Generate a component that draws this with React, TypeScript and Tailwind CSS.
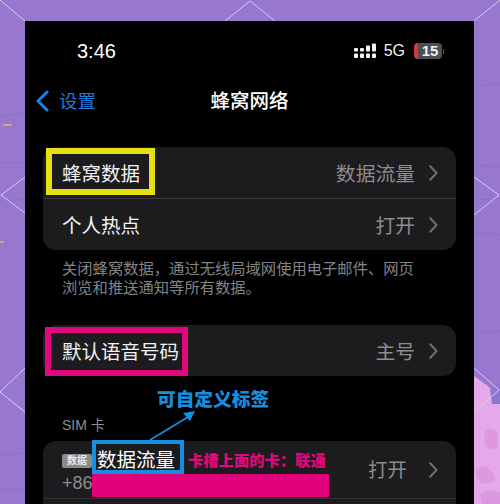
import type { ReactNode } from "react";

const CJK = "font-['Liberation_Sans','Noto_Sans_CJK_SC',sans-serif]";
const HEAVY = "font-['Noto_Sans_CJK_SC',sans-serif] font-black";

function Wallpaper() {
  return (
    <svg className="absolute inset-0" width="500" height="504" viewBox="0 0 500 504" fill="none">
      <path d="M474 376L488 386L500 402V504H474Z" fill="#e3a9e8" />
      <g fill="#d98ddb" opacity="0.55">
        <path d="M476 470Q484 462 492 472T484 484Q476 482 476 470Z" />
        <path d="M486 430Q498 426 498 440T488 448Q482 440 486 430Z" />
        <path d="M480 494Q490 488 500 492V504H482Z" />
      </g>
      <path d="M490 390L500 388V404L492 404Z" fill="#8a78d0" />
      <g stroke="#8a6cc2" strokeWidth="1" opacity="0.6">
        <path d="M0 116L25 113M0 163H25M0 201L25 199M0 455L25 453M0 490H25" />
        <path d="M474 86L500 84M474 165L500 167M474 200L500 199M474 232L500 235M474 333L500 331" />
      </g>
      <g stroke="#d9ccf0" strokeWidth="1">
        <path d="M0 0L25 21M225 21L250 1L275 21M474 21L500 0" />
        <path d="M25 177L1 195L25 213M25 368L0 392L25 412" />
        <path d="M474 177L499 195L474 215M474 368L499 390L474 412" />
      </g>
      <path d="M4 125H11" stroke="#d6a878" strokeWidth="2" strokeLinecap="round" />
      <path d="M0 242H3" stroke="#d6a878" strokeWidth="2" strokeLinecap="round" />
    </svg>
  );
}

function Chevron({ className }: { className?: string }) {
  return (
    <svg className={`shrink-0 ${className ?? "ml-[14px]"}`} width="9" height="16" viewBox="0 0 9 16" fill="none">
      <path d="M1.2 1.2L7.6 8L1.2 14.8" stroke="#6f6f72" strokeWidth="2" strokeLinecap="round" strokeLinejoin="round" />
    </svg>
  );
}

function Row({ label, value, className }: { label: string; value: string; className?: string }) {
  return (
    <div className={`flex items-center pl-[19px] pr-[18px] ${className ?? "h-[51px]"}`}>
      <span className="pt-[5px] text-[19.5px] text-[#f2f2f2]">{label}</span>
      <span className="ml-auto pt-[5px] text-[19.8px] text-[#8c8c8e]">{value}</span>
      <Chevron />
    </div>
  );
}

function Card({ children }: { children: ReactNode }) {
  return <div className="mx-[18px] overflow-hidden rounded-[13px] bg-[#1c1c1e]">{children}</div>;
}

function StatusBar() {
  return (
    <div className="flex h-[60px] items-center pl-[52px] pr-[30px]">
      <span className="font-['Liberation_Sans',sans-serif] text-[20px] font-medium text-white">3:46</span>
      <div className="ml-auto flex items-center">
        <svg width="23" height="16" viewBox="0 0 23 16" fill="#f5f5f5">
          <rect x="0" y="5" width="4" height="3.5" rx="1" />
          <rect x="0" y="10.5" width="4" height="4.5" rx="1" />
          <rect x="6" y="5" width="4" height="3.5" rx="1" />
          <rect x="6" y="10.5" width="4" height="4.5" rx="1" />
          <rect x="12" y="2.5" width="4" height="6" rx="1" />
          <rect x="12" y="10.5" width="4" height="4.5" rx="1" />
          <rect x="18" y="0.5" width="4" height="8" rx="1" />
          <rect x="18" y="10.5" width="4" height="4.5" rx="1" />
        </svg>
        <span className="ml-[7px] font-['Liberation_Sans',sans-serif] text-[16px] text-[#eeeeee]">5G</span>
        <div className="ml-[9px] flex h-[16px] w-[28px] items-center justify-center overflow-hidden rounded-[4px] border-l-[4px] border-l-[#d8373f] bg-[#4f4f4f]">
          <span className="font-['Liberation_Sans',sans-serif] text-[15px] font-bold text-[#f0f0f0]">15</span>
        </div>
        <div className="ml-[1px] h-[5px] w-[1px] bg-[#555555]" />
      </div>
    </div>
  );
}

function NavBar() {
  return (
    <div className="relative flex h-[40px] items-center">
      <svg className="ml-[10px]" width="14" height="22" viewBox="0 0 14 22" fill="none">
        <path d="M12 2L3 11L12 20" stroke="#1f7fe0" strokeWidth="3" strokeLinecap="round" strokeLinejoin="round" />
      </svg>
      <span className="ml-[10px] pt-[2px] text-[18.5px] text-[#1f7ad8]">设置</span>
      <span className="absolute left-[185.5px] pt-[2px] text-[19.5px] font-medium text-white">蜂窝网络</span>
    </div>
  );
}

export default function App() {
  return (
    <div className={`relative h-[504px] w-[500px] overflow-hidden bg-[#9878cf] ${CJK}`}>
      <Wallpaper />
      <div className="relative ml-[25px] h-[504px] w-[449px] overflow-hidden pt-[21px]">
        <div className="h-full bg-black">
          <StatusBar />
          <NavBar />

          <div className="mt-[26px]">
            <Card>
              <Row label="蜂窝数据" value="数据流量" className="h-[52px] border-b border-[#3a3a3c]" />
              <Row label="个人热点" value="打开" />
            </Card>
          </div>

          <p className="mx-[37px] mt-[9px] text-[15.3px] leading-[19px] text-[#848487]">
            关闭蜂窝数据，通过无线局域网使用电子邮件、网页
            <br />
            浏览和推送通知等所有数据。
          </p>

          <div className="mt-[28px]">
            <Card>
              <Row label="默认语音号码" value="主号" />
            </Card>
          </div>

          <p className="mx-[37px] mt-[38px] pt-[1px] text-[14px] leading-[20px] text-[#8e8e91]">SIM 卡</p>

          <div className="mx-[18px] mt-[6px] h-[80px] overflow-hidden rounded-[13px] bg-[#1c1c1e]">
            <div className="flex h-[58px] border-b border-[#333335] pl-[19px] pr-[18px]">
              <div className="flex flex-col">
                <div className="mt-[7px] flex items-center">
                  <span className="mt-[1px] flex h-[14px] w-[30px] items-center justify-center rounded-[2px] bg-[#8a8a8c] text-[10px] font-bold text-[#e8e8e8]">
                    数据
                  </span>
                  <span className="ml-[5px] text-[19.5px] leading-[24px] text-white">数据流量</span>
                </div>
                <span className="font-['Liberation_Sans',sans-serif] text-[18px] leading-[22px] text-[#8c8c8e]">+86</span>
              </div>
              <div className="ml-auto flex items-center">
                <span className="pt-[3px] text-[19.5px] text-[#8c8c8e]">打开</span>
                <Chevron className="ml-[22px]" />
              </div>
            </div>
          </div>
        </div>

        {/* annotations drawn over the screenshot */}
        <div className="absolute left-[21px] top-[148px] h-[47px] w-[109px] border-[6px] border-[#e6e012]" />
        <div className="absolute left-[20px] top-[327px] h-[49px] w-[143px] border-[6px] border-[#e0087c]" />
        <div className="absolute left-[67px] top-[440px] h-[34px] w-[92px] border-[4px] border-[#1590e0]" />
        <div className="absolute left-[67px] top-[474px] h-[23px] w-[237px] bg-[#e0007a]" />
        <span className={`absolute left-[132px] top-[384px] text-[18.7px] leading-[28px] text-[#1590e0] ${HEAVY}`}>
          可自定义标签
        </span>
        <span className={`absolute left-[163px] top-[448px] text-[15.3px] leading-[22px] text-[#e0087c] ${HEAVY}`}>
          卡槽上面的卡：联通
        </span>
        <svg className="absolute left-[120px] top-[405px]" width="80" height="38" viewBox="0 0 80 38" fill="none">
          <path d="M5 35L43 12" stroke="#1590e0" strokeWidth="1.5" />
          <path d="M50 6L38 8L45 16Z" fill="#1590e0" />
        </svg>
      </div>
    </div>
  );
}
